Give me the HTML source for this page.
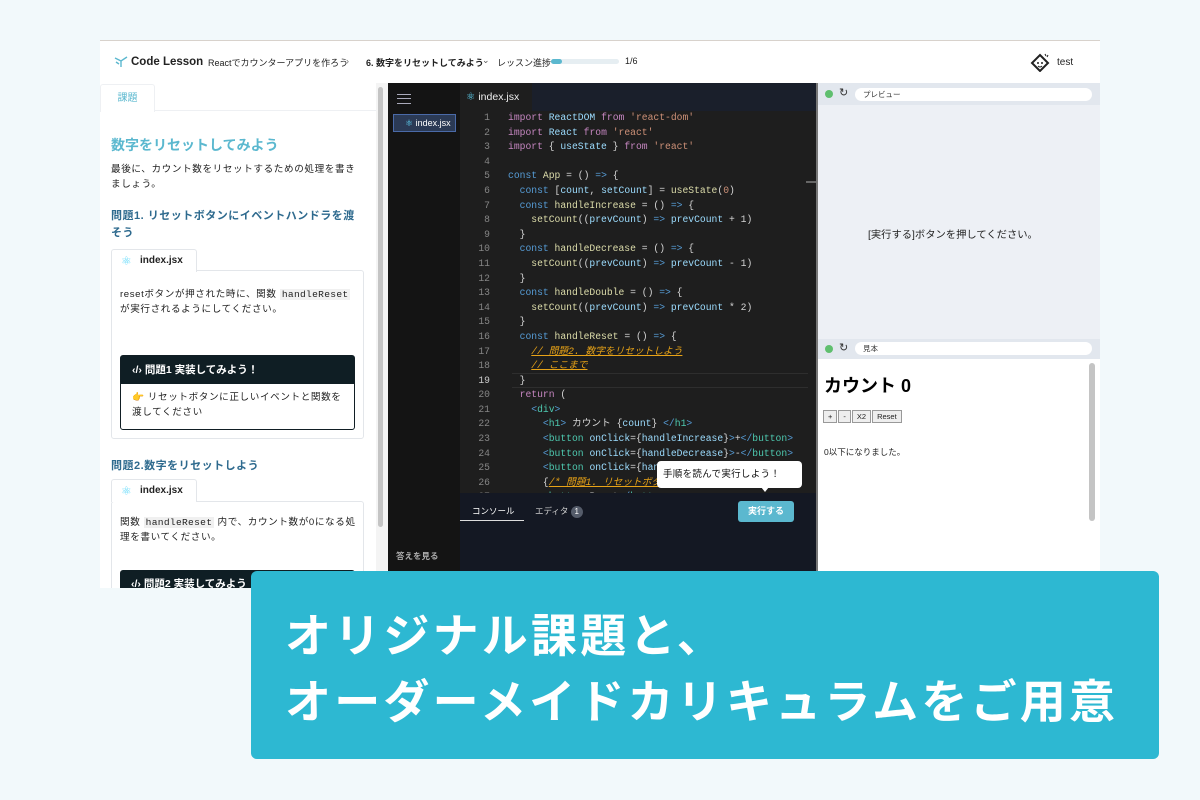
<!DOCTYPE html>
<html><head><meta charset="utf-8">
<style>
*{margin:0;padding:0;box-sizing:border-box}
body{width:1200px;height:800px;background:#f2f9fb;position:relative;overflow:hidden;font-family:"Liberation Sans","Noto Sans CJK JP",sans-serif;color:#222}
.a{position:absolute}
.shot{left:100px;top:40px;width:1000px;height:548px;background:#fff;border-top:1px solid #d8d2cc;overflow:hidden}
.hdr{left:0;top:0;width:1000px;height:42px;background:#fff;font-size:9px;color:#222}
.code{font-family:"Liberation Mono","Noto Sans CJK JP",monospace;font-size:9.7px;line-height:14.6px;white-space:pre}
.k{color:#c586c0}.b{color:#569cd6}.v{color:#9cdcfe}.s{color:#ce9178}.f{color:#dcdcaa}.t{color:#4ec9b0}.w{color:#d4d4d4}
.c{color:#e8a317;font-style:italic;text-decoration:underline;text-decoration-color:#e8a317}
.ln{color:#858585;text-align:right;width:30px}
.card{background:#fff;border:1px solid #e3e6ea;border-radius:3px}
.mono{font-family:"Liberation Mono",monospace;background:#f0f0f0;padding:0 2px;letter-spacing:0.3px}
.jp{font-size:9.6px;line-height:14.5px;letter-spacing:0.6px}
</style></head><body>
<div class="a shot">
 <div class="a hdr">
  <svg class="a" style="left:14px;top:15px" width="14" height="12" viewBox="0 0 14 12"><path d="M1 2 L7 5 L13 1 M7 5 L7 11 M2 6 L5 8" stroke="#5bb8cf" stroke-width="1.4" fill="none"/></svg>
  <div class="a" style="left:31px;top:15px;font-size:11.5px;font-weight:bold;color:#222">Code Lesson</div>
  <div class="a" style="left:108px;top:15px">Reactでカウンターアプリを作ろう</div>
  <div class="a" style="left:246px;top:15px;color:#777">›</div>
  <div class="a" style="left:266px;top:15px;font-weight:bold">6. 数字をリセットしてみよう</div>
  <div class="a" style="left:382px;top:14px;color:#555">⌄</div>
  <div class="a" style="left:397px;top:15px">レッスン進捗</div>
  <div class="a" style="left:451px;top:18px;width:68px;height:5px;background:#e6eef2;border-radius:3px"><div style="width:11px;height:5px;background:#5bb8cf;border-radius:3px"></div></div>
  <div class="a" style="left:525px;top:15px">1/6</div>
  <svg class="a" style="left:930px;top:11px" width="22" height="20" viewBox="0 0 22 20"><path d="M10 3 L18 11 L10 19 L2 11 Z" stroke="#222" stroke-width="2" fill="none"/><circle cx="8" cy="11" r="1" fill="#222"/><circle cx="12" cy="11" r="1" fill="#222"/><path d="M8 14 Q10 16 12 14" stroke="#222" fill="none"/><path d="M15 2 L16 4 M18 3 L17 5" stroke="#222"/></svg>
  <div class="a" style="left:957px;top:16px;font-size:10px">test</div>
 </div>
 <!-- left panel -->
 <div class="a" style="left:0;top:42px;width:288px;height:506px;background:#fff">
  <div class="a" style="left:0;top:0;width:278px;height:28px;border-bottom:1px solid #eef0f3"></div>
  <div class="a" style="left:0;top:1px;width:55px;height:28px;border:1px solid #eef0f3;border-bottom:none;border-radius:3px 3px 0 0;background:#fff;text-align:center;font-size:10px;line-height:28px;color:#5bb8cf">課題</div>
  <div class="a" style="left:11px;top:52px;font-size:14px;font-weight:bold;color:#5bb8cf">数字をリセットしてみよう</div>
  <div class="a jp" style="left:11px;top:80px;width:252px">最後に、カウント数をリセットするための処理を書きましょう。</div>
  <div class="a" style="left:11px;top:125px;width:252px;font-size:11px;line-height:17px;font-weight:bold;color:#2e6a8e;letter-spacing:0.5px">問題1. リセットボタンにイベントハンドラを渡そう</div>
  <div class="a card" style="left:11px;top:187px;width:253px;height:169px"></div>
  <div class="a" style="left:11px;top:166px;width:86px;height:23px;background:#fff;border:1px solid #e3e6ea;border-bottom:none;border-radius:3px 3px 0 0;font-size:10px;font-weight:bold;line-height:22px;padding-left:28px">index.jsx</div>
  <div class="a" style="left:21px;top:171px;font-size:12px;color:#61dafb">⚛</div>
  <div class="a jp" style="left:20px;top:204px;width:238px;line-height:15px">resetボタンが押された時に、関数 <span class="mono">handleReset</span> が実行されるようにしてください。</div>
  <div class="a" style="left:20px;top:272px;width:235px;height:75px;border:1px solid #111e24;border-radius:3px"><div style="background:#0f1e24;color:#fff;height:28px;font-size:10.5px;font-weight:bold;line-height:28px;padding-left:11px">‹/› 問題1 実装してみよう！</div><div class="jp" style="padding:7px 11px">👉 リセットボタンに正しいイベントと関数を渡してください</div></div>
  <div class="a" style="left:11px;top:374px;font-size:11px;font-weight:bold;color:#2e6a8e;letter-spacing:0.5px">問題2.数字をリセットしよう</div>
  <div class="a card" style="left:11px;top:418px;width:253px;height:100px"></div>
  <div class="a" style="left:11px;top:396px;width:86px;height:23px;background:#fff;border:1px solid #e3e6ea;border-bottom:none;border-radius:3px 3px 0 0;font-size:10px;font-weight:bold;line-height:22px;padding-left:28px">index.jsx</div>
  <div class="a" style="left:21px;top:401px;font-size:12px;color:#61dafb">⚛</div>
  <div class="a jp" style="left:20px;top:432px;width:238px;line-height:15px">関数 <span class="mono">handleReset</span> 内で、カウント数が0になる処理を書いてください。</div>
  <div class="a" style="left:20px;top:487px;width:235px;height:30px;background:#0f1e24;border-radius:3px;color:#fff;font-size:10.5px;font-weight:bold;line-height:28px;padding-left:11px">‹/› 問題2 実装してみよう！</div>
  <div class="a" style="left:276px;top:0;width:12px;height:506px;background:#f4f4f4"></div>
  <div class="a" style="left:278px;top:4px;width:5px;height:440px;background:#c4c4c4;border-radius:3px"></div>
 </div>
 <!-- editor -->
 <div class="a" style="left:288px;top:42px;width:428px;height:506px;background:#1e1e1e">
  <div class="a" style="left:0;top:0;width:72px;height:506px;background:#141414"></div>
  <div class="a" style="left:9px;top:11px;width:14px;height:10px;border-top:1.5px solid #aab;border-bottom:1.5px solid #aab"><div style="margin-top:3px;border-top:1.5px solid #aab"></div></div>
  <div class="a" style="left:5px;top:31px;width:63px;height:18px;background:#2b3a55;border:1px solid #4a6aa8;color:#fff;font-size:9px;line-height:16px;padding-left:11px"><span style="color:#61dafb">⚛</span> index.jsx</div>
  <div class="a" style="left:8px;top:467px;font-size:8.5px;color:#aaa;font-weight:bold">答えを見る</div>
  <div class="a" style="left:72px;top:0;width:356px;height:28px;background:#1a1f2b"></div>
  <div class="a" style="left:72px;top:0;width:72px;height:28px;background:#1e1e1e;color:#eee;font-size:10.5px;line-height:28px;padding-left:6px"><span style="color:#61dafb">⚛</span> index.jsx</div>
  <div class="a" style="left:124px;top:290px;width:296px;height:15px;border-top:1px solid #2e2e2e;border-bottom:1px solid #2e2e2e"></div>
  <div class="a code ln" style="left:72px;top:28px">1
2
3
4
5
6
7
8
9
10
11
12
13
14
15
16
17
18
<span style="color:#ccc">19</span>
20
21
22
23
24
25
26
27</div>
  <div class="a code w" style="left:120px;top:28px"><span class="k">import</span> <span class="v">ReactDOM</span> <span class="k">from</span> <span class="s">'react-dom'</span>
<span class="k">import</span> <span class="v">React</span> <span class="k">from</span> <span class="s">'react'</span>
<span class="k">import</span> { <span class="v">useState</span> } <span class="k">from</span> <span class="s">'react'</span>

<span class="b">const</span> <span class="f">App</span> = () <span class="b">=&gt;</span> {
  <span class="b">const</span> [<span class="v">count</span>, <span class="v">setCount</span>] = <span class="f">useState</span>(<span class="s">0</span>)
  <span class="b">const</span> <span class="f">handleIncrease</span> = () <span class="b">=&gt;</span> {
    <span class="f">setCount</span>((<span class="v">prevCount</span>) <span class="b">=&gt;</span> <span class="v">prevCount</span> + 1)
  }
  <span class="b">const</span> <span class="f">handleDecrease</span> = () <span class="b">=&gt;</span> {
    <span class="f">setCount</span>((<span class="v">prevCount</span>) <span class="b">=&gt;</span> <span class="v">prevCount</span> - 1)
  }
  <span class="b">const</span> <span class="f">handleDouble</span> = () <span class="b">=&gt;</span> {
    <span class="f">setCount</span>((<span class="v">prevCount</span>) <span class="b">=&gt;</span> <span class="v">prevCount</span> * 2)
  }
  <span class="b">const</span> <span class="f">handleReset</span> = () <span class="b">=&gt;</span> {
    <span class="c">// 問題2. 数字をリセットしよう</span>
    <span class="c">// ここまで</span>
  }
  <span class="k">return</span> (
    <span class="b">&lt;</span><span class="t">div</span><span class="b">&gt;</span>
      <span class="b">&lt;</span><span class="t">h1</span><span class="b">&gt;</span> カウント {<span class="v">count</span>} <span class="b">&lt;/</span><span class="t">h1</span><span class="b">&gt;</span>
      <span class="b">&lt;</span><span class="t">button</span> <span class="v">onClick</span>={<span class="v">handleIncrease</span>}<span class="b">&gt;</span>+<span class="b">&lt;/</span><span class="t">button</span><span class="b">&gt;</span>
      <span class="b">&lt;</span><span class="t">button</span> <span class="v">onClick</span>={<span class="v">handleDecrease</span>}<span class="b">&gt;</span>-<span class="b">&lt;/</span><span class="t">button</span><span class="b">&gt;</span>
      <span class="b">&lt;</span><span class="t">button</span> <span class="v">onClick</span>={<span class="v">handleDouble</span>}<span class="b">&gt;</span>X2<span class="b">&lt;/</span><span class="t">button</span><span class="b">&gt;</span>
      {<span class="c">/* 問題1. リセットボタンにイベントを渡そう */</span>}
      <span class="b">&lt;</span><span class="t">button</span><span class="b">&gt;</span>Reset<span class="b">&lt;/</span><span class="t">button</span><span class="b">&gt;</span></div>
  <div class="a" style="left:418px;top:98px;width:10px;height:2px;background:#666"></div>
  <div class="a" style="left:72px;top:410px;width:356px;height:96px;background:#141823"></div>
  <div class="a" style="left:84px;top:422px;font-size:8.5px;color:#fff">コンソール</div>
  <div class="a" style="left:72px;top:437px;width:64px;height:1px;background:#ddd"></div>
  <div class="a" style="left:147px;top:422px;font-size:8.5px;color:#ccc">エディタ <span style="display:inline-block;width:12px;height:12px;border-radius:6px;background:#555c6a;color:#fff;text-align:center;line-height:12px;font-size:8px">1</span></div>
  <div class="a" style="left:350px;top:418px;width:56px;height:21px;background:#5bb8cf;border-radius:3px;color:#fff;font-size:9px;font-weight:bold;text-align:center;line-height:21px">実行する</div>
  <div class="a" style="left:269px;top:378px;width:145px;height:27px;background:#fff;border-radius:4px;font-size:9.5px;line-height:27px;padding-left:6px;color:#111;letter-spacing:0.3px">手順を読んで実行しよう！</div>
  <div class="a" style="left:373px;top:404px;width:0;height:0;border-left:4px solid transparent;border-right:4px solid transparent;border-top:5px solid #fff"></div>
 </div>
 <!-- right -->
 <div class="a" style="left:716px;top:42px;width:2px;height:506px;background:#777"></div>
 <div class="a" style="left:718px;top:42px;width:282px;height:506px;background:#edf0f5">
  <div class="a" style="left:0;top:0;width:282px;height:22px;background:#e2e7ee"></div>
  <div class="a" style="left:7px;top:7px;width:8px;height:8px;border-radius:4px;background:#5fbf6e"></div>
  <div class="a" style="left:21px;top:3px;font-size:11px;color:#333">↻</div>
  <div class="a" style="left:37px;top:5px;width:237px;height:13px;background:#fff;border-radius:7px;font-size:7.5px;line-height:13px;padding-left:8px;color:#333">プレビュー</div>
  <div class="a" style="left:50px;top:143px;font-size:10.3px;color:#222">[実行する]ボタンを押してください。</div>
  <div class="a" style="left:0;top:256px;width:282px;height:20px;background:#e2e7ee"></div>
  <div class="a" style="left:7px;top:262px;width:8px;height:8px;border-radius:4px;background:#5fbf6e"></div>
  <div class="a" style="left:21px;top:258px;font-size:11px;color:#333">↻</div>
  <div class="a" style="left:37px;top:259px;width:237px;height:13px;background:#fff;border-radius:7px;font-size:7.5px;line-height:13px;padding-left:8px;color:#333">見本</div>
  <div class="a" style="left:0;top:276px;width:282px;height:230px;background:#fff">
   <div class="a" style="left:6px;top:13px;font-size:18px;font-weight:bold;color:#000">カウント 0</div>
   <div class="a" style="left:5px;top:51px;font-size:7.5px;display:flex;gap:1px"><span style="border:1px solid #999;background:#eee;padding:1px 4px">+</span><span style="border:1px solid #999;background:#eee;padding:1px 4px">-</span><span style="border:1px solid #999;background:#eee;padding:1px 4px">X2</span><span style="border:1px solid #999;background:#eee;padding:1px 4px">Reset</span></div>
   <div class="a" style="left:6px;top:87px;font-size:8.5px;color:#222">0以下になりました。</div>
   <div class="a" style="left:271px;top:4px;width:6px;height:158px;background:#c4c4c4;border-radius:3px"></div>
  </div>
 </div>
</div>
<div class="a" style="left:251px;top:571px;width:908px;height:188px;background:#2db8d2;border-radius:6px"></div>
<div class="a" style="left:285px;top:603px;font-size:46px;line-height:66px;font-weight:bold;color:#fff;letter-spacing:3.2px;white-space:nowrap">オリジナル課題と、<br>オーダーメイドカリキュラムをご用意</div>
</body></html>
